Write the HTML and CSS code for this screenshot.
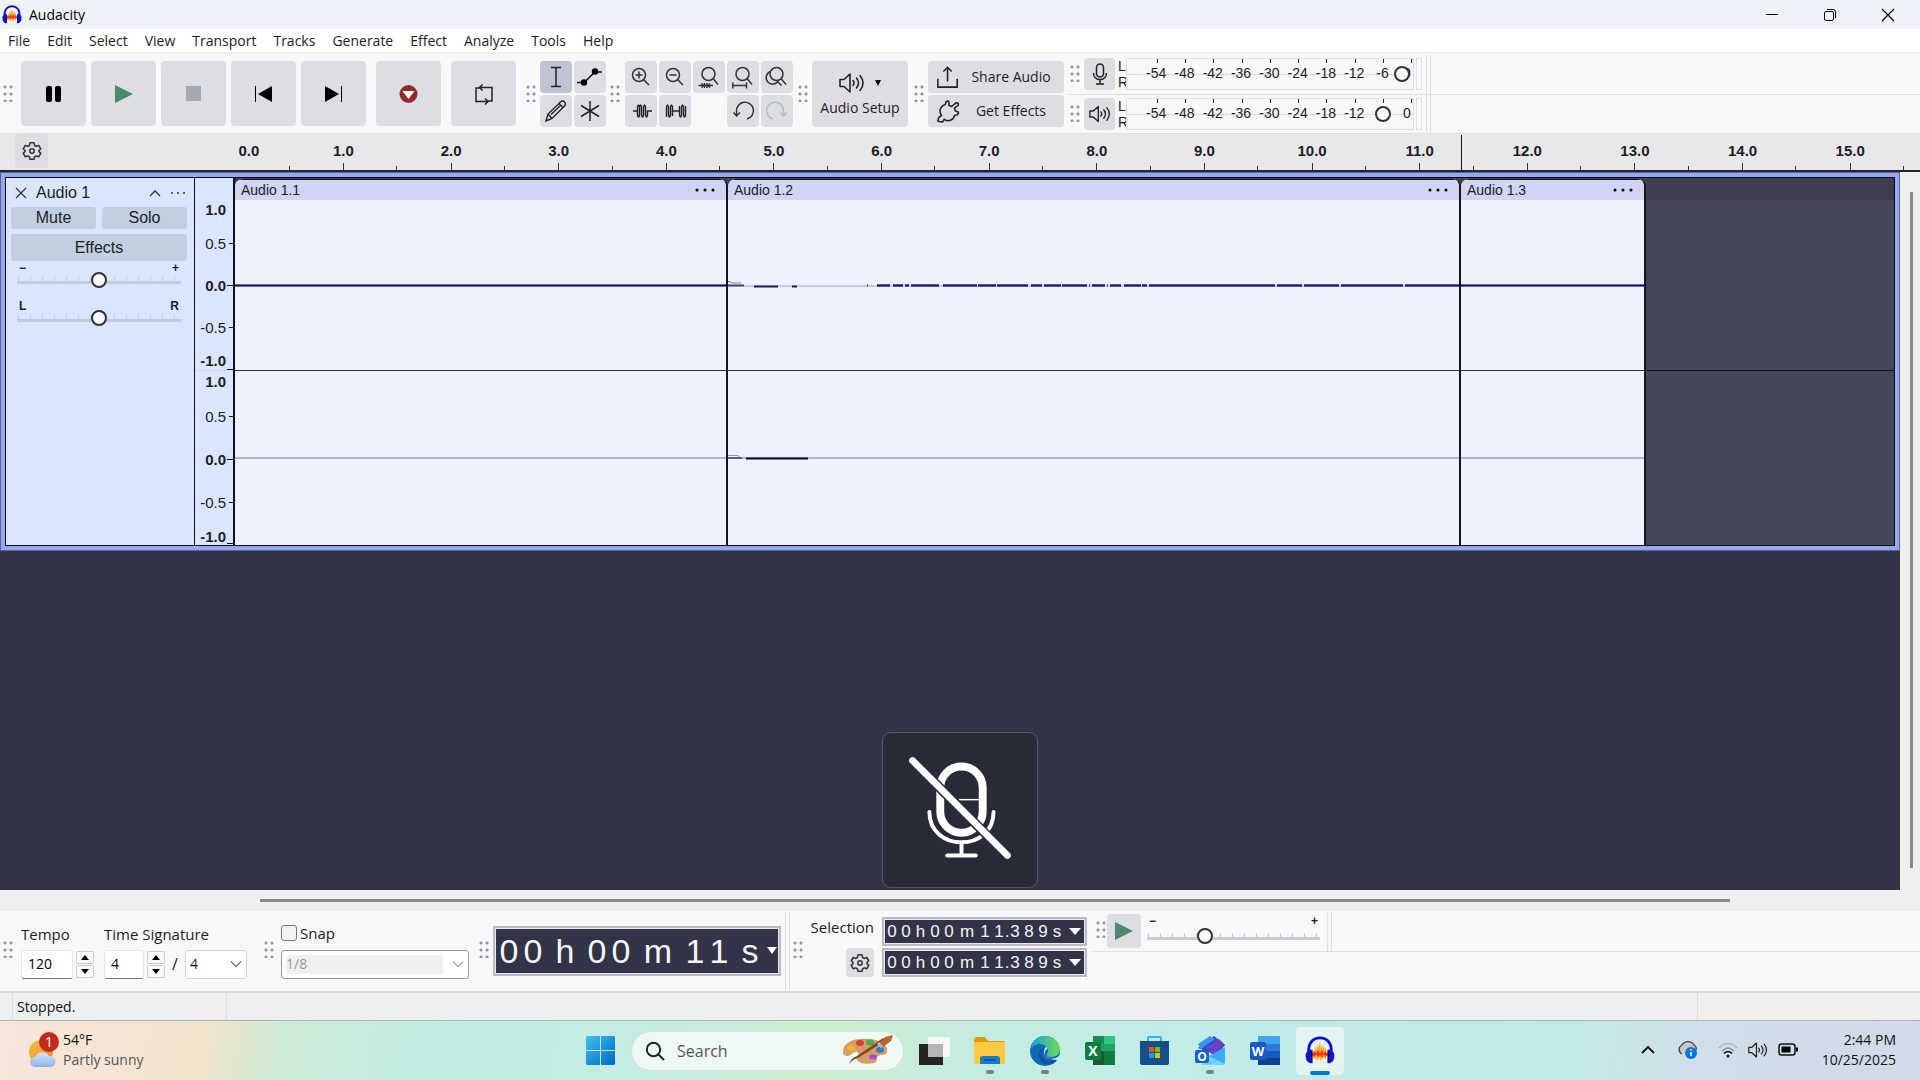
FILE: index.html
```html
<!DOCTYPE html>
<html lang="en">
<head>
<meta charset="utf-8">
<title>Audacity</title>
<link rel="stylesheet" href="styles.css">
</head>
<body>
<svg class="sprite" aria-hidden="true">
  <symbol id="gear" viewBox="0 0 20 20"><path d="M8 1.8h4l.6 2.7 1.6.9 2.6-.9 2 3.3-2 1.9v.8l2 1.900-2 3.300-2.600-.8-1.600.9-.6 2.500H8l-.6-2.500-1.600-.9-2.600.8-2-3.300 2-1.900v-.8l-2-1.900 2-3.300 2.600.9 1.600-.9z" fill="none" stroke="#333" stroke-width="1.500" stroke-linejoin="round"/><circle cx="10" cy="10" r="2.200" fill="none" stroke="#333" stroke-width="1.500"/></symbol>
  <symbol id="audacity" viewBox="0 0 32 32"><path d="M8 20l1-5 1 3 1-7 1 5 1-8 1 6 2-8 1 8 1-6 1 7 1-6 1 6 1-3 1 8-1 5-2-3-1 4-1-4-1 5-2-5-2 5-1-5-1 4-1-4-2 3z" fill="#ffa51e"/><path d="M6 18h3l1-2 2 2 2-3 2 3 2-3 2 3 2-2 1 2h3v3h-3l-1 1-2-2-2 3-2-3-2 3-2-3-2 2-1-1H6z" fill="#f0391d"/><path d="M4 18C3 7 9 2 16 2s13 5 12 16" fill="none" stroke="#1414c8" stroke-width="3"/><path d="M8 15v14H6C1 28 0 22 1 18l4-4zM24 15v14h2c5-1 6-7 5-11l-4-4z" fill="#1414c8"/><path d="M7 16v12M25 16v12" stroke="#0a0a64" stroke-width="1.400"/></symbol>
  <symbol id="speaker" viewBox="0 0 26 20"><path d="M1 6.500h4L11 1v18l-6-5.500H1z" fill="none" stroke="#222" stroke-width="1.600" stroke-linejoin="round"/><path d="M14 7.500q2 2.500 0 5M17.500 5q4 5 0 10M21 2.500q6 7.500 0 15" fill="none" stroke="#222" stroke-width="1.600" stroke-linecap="round"/></symbol>
  <symbol id="chev" viewBox="0 0 12 8"><path d="M1 1.500l5 5 5-5" fill="none" stroke="currentColor" stroke-width="1.300"/></symbol>
</svg>

<header class="titlebar">
  <svg class="logo"><use href="#audacity"/></svg>
  <h1>Audacity</h1>
  <div class="winbtns">
    <button aria-label="Minimize"><svg width="14" height="14"><path d="M1 6.500h12" stroke="#000"/></svg></button>
    <button aria-label="Restore"><svg width="14" height="14" fill="none" stroke="#000"><rect x="1.500" y="3.500" width="9" height="9" rx="1.500"/><path d="M4 1.500h6a2.500 2.500 0 0 1 2.500 2.500v6"/></svg></button>
    <button aria-label="Close"><svg width="14" height="14"><path d="M1 1l12 12M13 1L1 13" stroke="#000" stroke-width="1.200"/></svg></button>
  </div>
</header>

<nav class="menubar">
  <button>File</button><button>Edit</button><button>Select</button><button>View</button><button>Transport</button><button>Tracks</button><button>Generate</button><button>Effect</button><button>Analyze</button><button>Tools</button><button>Help</button>
</nav>

<section class="toolbar" aria-label="Toolbars">
  <i class="grip"></i>
  <div class="transport">
    <button class="btn big" aria-label="Pause"><svg viewBox="0 0 65 65"><rect x="25" y="25" width="6" height="16" rx="2"/><rect x="34" y="25" width="6" height="16" rx="2"/></svg></button>
    <button class="btn big" aria-label="Play"><svg viewBox="0 0 65 65"><path d="M24 24v18l18-9z" fill="#4c8a6c"/></svg></button>
    <button class="btn big" aria-label="Stop"><svg viewBox="0 0 65 65"><path d="M25 25h15v15H25z" fill="#a4a8b2"/></svg></button>
    <button class="btn big" aria-label="Skip to start"><svg viewBox="0 0 65 65"><path d="M24 25h1v16h-1zM41 25v16l-14-8z"/></svg></button>
    <button class="btn big" aria-label="Skip to end"><svg viewBox="0 0 65 65"><path d="M40 25h1v16h-1zM24 25v16l14-8z"/></svg></button>
    <button class="btn big apart" aria-label="Record"><svg viewBox="0 0 65 65"><circle cx="32.500" cy="33" r="9" fill="#8f2b2b"/><path d="M26.500 30h12l-6 8z" fill="#fff"/></svg></button>
    <button class="btn big apart" aria-label="Loop"><svg viewBox="0 0 65 65" fill="none" stroke="#222" stroke-width="1.500"><path d="M29 27h-4v13.500h11M29 26.500h12V40h-4M31.500 23.500l-3 3 3 3M34 37.500l3 3-3 3"/></svg></button>
  </div>
  <i class="grip g10"></i>
  <div class="tools">
    <button class="btn on" aria-label="Selection tool"><svg viewBox="0 0 32 32"><path d="M11 6.500h4.200l.8 1 .8-1H21M11 25.500h4.200l.8-1 .8 1H21M16 7v18" fill="none" stroke="#222" stroke-width="1.500"/></svg></button>
    <button class="btn" aria-label="Envelope tool"><svg viewBox="0 0 32 32"><path d="M3 21.500h7L21 11h7" fill="none" stroke="#111" stroke-width="1.500"/><circle cx="10" cy="21.500" r="3.200"/><circle cx="21" cy="10.500" r="3.200"/></svg></button>
    <button class="btn" aria-label="Draw tool"><svg viewBox="0 0 32 32" fill="none" stroke="#222" stroke-width="1.400"><path d="M6 26l2-7L20.500 7c3-2.500 6.500 1 4 4L12 23.500zM8 19l4 4.500M19 8.500l4 4M11 19.500L21 10"/></svg></button>
    <button class="btn" aria-label="Multi tool"><svg viewBox="0 0 32 32"><path d="M16 6v20M7 10.500l18 11M25 10.500l-18 11" stroke="#222" stroke-width="1.500"/></svg></button>
  </div>
  <i class="grip"></i>
  <div class="zooms">
    <button class="btn" aria-label="Zoom in"><svg viewBox="0 0 32 32" fill="none" stroke="#333" stroke-width="1.500"><circle cx="14" cy="14" r="6.500"/><path d="M18.500 18.500L24 24M10.500 14h7M14 10.500v7"/></svg></button>
    <button class="btn" aria-label="Zoom out"><svg viewBox="0 0 32 32" fill="none" stroke="#333" stroke-width="1.500"><circle cx="14" cy="14" r="6.500"/><path d="M18.500 18.500L24 24M10.500 14h7"/></svg></button>
    <button class="btn" aria-label="Fit selection"><svg viewBox="0 0 32 32" fill="none" stroke="#333" stroke-width="1.500"><circle cx="15.500" cy="13" r="6.500"/><path d="M20 17.500l5 6M5.500 24.500H20M11.500 22v5M14 22v5M8.500 22.500l2 2-2 2M17 22.500l-2 2 2 2"/></svg></button>
    <button class="btn" aria-label="Fit project"><svg viewBox="0 0 32 32" fill="none" stroke="#333" stroke-width="1.500"><circle cx="15.500" cy="13" r="6.500"/><path d="M20 17.500l5 6M6 24.500h13.500M5.800 21.500v6M19.500 21.500v6"/></svg></button>
    <button class="btn" aria-label="Zoom toggle"><svg viewBox="0 0 32 32" fill="none" stroke="#333" stroke-width="1.500"><circle cx="15.500" cy="13" r="6.500"/><path d="M20 17.500l5 6M9.500 10.500a6.500 6.500 0 1 0 8 9M16 20l4.500 4.500"/></svg></button>
    <button class="btn" aria-label="Trim audio"><svg viewBox="0 0 32 32" fill="none" stroke="#222" stroke-width="1.400"><path d="M8 16h4.500v4q1 4 2 0v-8q1-4 2 0v8q1 4 2 0v-8q1-4 2 0v8q1 4 2 0v-4H27M12.500 16v-4q1-4 2 0"/></svg></button>
    <button class="btn" aria-label="Silence audio"><svg viewBox="0 0 32 32" fill="none" stroke="#222" stroke-width="1.400"><path d="M7.500 22V12q1-4 2 0v8q1 4 2 0v-8q1-4 2 0v4h7v4q1 4 2 0v-8q1-4 2 0v8q1 4 2 0V11M13.500 16v5M20.500 16v-5"/></svg></button>
    <button class="btn undo" aria-label="Undo"><svg viewBox="0 0 32 32" fill="none" stroke="#333" stroke-width="1.500"><path d="M20 24a8.500 8.500 0 1 0-10.500-7.500v4M6.500 17.500l3 3.500 3.500-3.500"/></svg></button>
    <button class="btn" aria-label="Redo" disabled><svg viewBox="0 0 32 32" fill="none" stroke="#b6b9c1" stroke-width="1.500"><path d="M12 24a8.500 8.500 0 1 1 10.500-7.500v4M25.500 17.500l-3 3.500-3.500-3.500"/></svg></button>
  </div>
  <i class="grip"></i>
  <button class="btn setup"><span class="setupicon"><svg width="26" height="20"><use href="#speaker"/></svg><svg width="8" height="8"><path d="M1 1h6L4 7z"/></svg></span><span>Audio Setup</span></button>
  <i class="grip g6"></i>
  <div class="share">
    <button class="btn wide"><svg viewBox="0 0 26 26" fill="none" stroke="#222" stroke-width="1.700"><path d="M2 15v9h21v-9M12.500 18V3M8 7l4.500-4.500L17 7"/></svg><span>Share Audio</span></button>
    <button class="btn wide"><svg viewBox="0 0 26 26" fill="none" stroke="#222" stroke-width="1.700" stroke-linejoin="round"><path d="M2 24l1-4 3-2C2 12 6 7 10 6l1-3q3-2 3 1v3l3 1 5-4q3 0 2 3l-4 3 1 3 3 1q1 2-1 3l-3 1c-1 5-7 7-11 4l-2 3z"/></svg><span>Get Effects</span></button>
  </div>
  <div class="meters">
    <div class="meterrow">
      <i class="grip"></i>
      <button class="btn mbtn" aria-label="Record meter"><svg width="18" height="22" viewBox="0 0 18 22" fill="none" stroke="#222" stroke-width="1.500"><rect x="5.500" y="1" width="7" height="13" rx="3.500"/><path d="M2.500 10c0 9 13 9 13 0M9 17v4M5 21h8"/></svg></button>
      <span class="lr"><b>L</b><b>R</b></span>
      <div class="meter"><ul><li>-54</li><li>-48</li><li>-42</li><li>-36</li><li>-30</li><li>-24</li><li>-18</li><li>-12</li><li>-6</li><li>0</li></ul><input type="range" aria-label="Recording volume" min="0" max="100" value="99"></div>
      <i class="clipbox"></i><i class="sep"></i>
    </div>
    <div class="meterrow">
      <i class="grip"></i>
      <button class="btn mbtn" aria-label="Playback meter"><svg width="22" height="18"><use href="#speaker"/></svg></button>
      <span class="lr"><b>L</b><b>R</b></span>
      <div class="meter"><ul><li>-54</li><li>-48</li><li>-42</li><li>-36</li><li>-30</li><li>-24</li><li>-18</li><li>-12</li><li></li><li>0</li></ul><input type="range" aria-label="Playback volume" min="0" max="100" value="92"></div>
      <i class="clipbox"></i><i class="sep"></i>
    </div>
  </div>
</section>

<section class="ruler" aria-label="Timeline">
  <button class="btn gearbtn" aria-label="Timeline options"><svg width="20" height="20"><use href="#gear"/></svg></button>
  <ol><li>0.0</li><li>1.0</li><li>2.0</li><li>3.0</li><li>4.0</li><li>5.0</li><li>6.0</li><li>7.0</li><li>8.0</li><li>9.0</li><li>10.0</li><li>11.0</li><li>12.0</li><li>13.0</li><li>14.0</li><li>15.0</li></ol>
  <i class="playhead"></i>
</section>

<main class="project">
  <section class="tracks">
    <article class="track">
      <div class="panel">
        <div class="phead">
          <button aria-label="Close track"><svg width="12" height="12"><path d="M1 1l10 10M11 1L1 11" stroke="#333" stroke-width="1.200"/></svg></button>
          <span class="name">Audio 1</span>
          <button aria-label="Collapse"><svg width="12" height="8"><path d="M1 7l5-5 5 5" fill="none" stroke="#333" stroke-width="1.300"/></svg></button>
          <button aria-label="Track menu"><svg width="16" height="4" fill="#333"><circle cx="2" cy="2" r="1"/><circle cx="8" cy="2" r="1"/><circle cx="14" cy="2" r="1"/></svg></button>
        </div>
        <div class="prow"><button>Mute</button><button>Solo</button></div>
        <button class="fx">Effects</button>
        <div class="slide"><div><span>−</span><span>+</span></div><input type="range" aria-label="Gain" value="50"></div>
        <div class="slide"><div><span>L</span><span>R</span></div><input type="range" aria-label="Pan" value="50"></div>
      </div>
      <div class="vruler">
        <ul class="vtop"><li class="no">1.0</li><li class="half">0.5</li><li>0.0</li><li class="half">-0.5</li><li class="end"><span>-1.0</span></li></ul>
        <ul class="vbot"><li class="no">1.0</li><li class="half">0.5</li><li>0.0</li><li class="half">-0.5</li><li class="end"><span>-1.0</span></li></ul>
      </div>
      <div class="clips">
        <div class="clip">
          <div class="chead"><span>Audio 1.1</span><button aria-label="Clip menu"><svg width="20" height="4"><circle cx="2" cy="2" r="1.500"/><circle cx="10" cy="2" r="1.500"/><circle cx="18" cy="2" r="1.500"/></svg></button></div>
          <svg class="ch1" viewBox="0 0 492 170" preserveAspectRatio="none"><path d="M0 85.500h492" stroke="#6e69bb" stroke-width="3"/><path d="M0 85.500h492" stroke="#120f40"/></svg>
          <svg class="ch2" viewBox="0 0 492 174" preserveAspectRatio="none"><path d="M0 87.500h492" stroke="#6f6fc6"/></svg>
        </div>
        <div class="clip">
          <div class="chead"><span>Audio 1.2</span><button aria-label="Clip menu"><svg width="20" height="4"><circle cx="2" cy="2" r="1.500"/><circle cx="10" cy="2" r="1.500"/><circle cx="18" cy="2" r="1.500"/></svg></button></div>
          <svg class="ch1" viewBox="0 0 731 170" preserveAspectRatio="none" fill="none"><path d="M0 81.500h2l2 1.500h9" stroke="#7f7ac8"/><path d="M16 86h715" stroke="#a5a0d8"/><path d="M0 85.500h16" stroke="#45414f" stroke-width="2"/><path d="M26 86.500h24M64 86.500h5" stroke="#1f1c56" stroke-width="2"/><path d="M139 85.500h1M149 85.500h13M165 85.500h10M177 85.500h4M183 85.500h28M215 85.500h34M250 85.500h18M269 85.500h31M303 85.500h11M316 85.500h17M334 85.500h25M361 85.500h1M364 85.500h13M379 85.500h1M382 85.500h11M396 85.500h17M414 85.500h5M421 85.500h126M549 85.500h25M576 85.500h35M613 85.500h62M677 85.500h54" stroke="#5a559f" stroke-width="3"/><path d="M149 85.500h13M165 85.500h10M177 85.500h4M183 85.500h28M215 85.500h34M250 85.500h18M269 85.500h31M303 85.500h11M316 85.500h17M334 85.500h25M364 85.500h13M382 85.500h11M396 85.500h17M414 85.500h5M421 85.500h126M549 85.500h25M576 85.500h35M613 85.500h62M677 85.500h54" stroke="#1f1c56"/></svg>
          <svg class="ch2" viewBox="0 0 731 174" preserveAspectRatio="none" fill="none"><path d="M0 87.500h731" stroke="#6f6fc6"/><path d="M0 85h9l3 1" stroke="#8f8bcb"/><path d="M0 87.500h14" stroke="#111"/><path d="M18 88h62" stroke="#0d0b2c" stroke-width="2"/></svg>
        </div>
        <div class="clip">
          <div class="chead"><span>Audio 1.3</span><button aria-label="Clip menu"><svg width="20" height="4"><circle cx="2" cy="2" r="1.500"/><circle cx="10" cy="2" r="1.500"/><circle cx="18" cy="2" r="1.500"/></svg></button></div>
          <svg class="ch1" viewBox="0 0 184 170" preserveAspectRatio="none"><path d="M0 85.500h184" stroke="#6e69bb" stroke-width="3"/><path d="M0 85.500h184" stroke="#120f40"/></svg>
          <svg class="ch2" viewBox="0 0 184 174" preserveAspectRatio="none"><path d="M0 87.500h184" stroke="#6f6fc6"/></svg>
        </div>
        <div class="empty"><i></i></div>
      </div>
    </article>
    <div class="muted" role="img" aria-label="Microphone muted">
      <svg viewBox="0 0 156 156" fill="none" stroke="#fff"><rect x="58" y="34" width="43" height="67" rx="21.500" stroke-width="8"/><path d="M47 80c0 41 65 41 65 0" stroke-width="4" stroke-linecap="round"/><path d="M79.500 112v11" stroke-width="4"/><path d="M65 124h29" stroke-width="4" stroke-linecap="round"/><path d="M77 67.500h21" stroke-width="1.500"/><path d="M30 28l96 96" stroke="#292a37" stroke-width="10"/><path d="M30 28l96 96" stroke-width="7" stroke-linecap="round"/></svg>
    </div>
  </section>
  <div class="vscroll"><i></i></div>
  <div class="hscroll"><i></i></div>
</main>

<section class="bottombar" aria-label="Bottom toolbars">
  <i class="grip"></i>
  <div class="field tempo"><label for="tempo">Tempo</label>
    <div class="line"><input id="tempo" type="text" value="120"><span class="spin"><button aria-label="Tempo up"><svg width="8" height="5"><path d="M0 5h8L4 0z"/></svg></button><button aria-label="Tempo down"><svg width="8" height="5"><path d="M0 0h8L4 5z"/></svg></button></span></div></div>
  <div class="field sig"><label for="beats">Time Signature</label>
    <div class="line"><input id="beats" type="text" value="4"><span class="spin"><button aria-label="Beats up"><svg width="8" height="5"><path d="M0 5h8L4 0z"/></svg></button><button aria-label="Beats down"><svg width="8" height="5"><path d="M0 0h8L4 5z"/></svg></button></span><span class="slash">/</span><span class="combo"><select aria-label="Note value"><option>4</option></select><svg width="12" height="8"><use href="#chev"/></svg></span></div></div>
  <i class="grip"></i>
  <div class="field snap"><label><input type="checkbox">Snap</label>
    <span class="combo off"><select aria-label="Snap to" disabled><option>1/8</option></select><svg width="12" height="8"><use href="#chev"/></svg></span></div>
  <i class="grip"></i>
  <div class="time large"><span>0</span><span>0</span><span class="h">h</span><span>0</span><span>0</span><span class="m">m</span><span>1</span><span>1</span><span class="s">s</span><button aria-label="Time format"><svg width="10" height="8"><path d="M0 0h10L5 7z" fill="#fff"/></svg></button></div>
  <i class="sep"></i>
  <i class="grip"></i>
  <div class="selection">
    <span class="sellabel">Selection</span>
    <div class="time"><span>0</span><span>0</span><span class="h">h</span><span>0</span><span>0</span><span class="m">m</span><span>1</span><span>1</span><span class="dot">.</span><span>3</span><span>8</span><span>9</span><span>s</span><button aria-label="Time format"><svg width="12" height="7"><path d="M0 0h12L6 7z" fill="#fff"/></svg></button></div>
    <button class="btn selgear" aria-label="Selection options"><svg width="20" height="20"><use href="#gear"/></svg></button>
    <div class="time"><span>0</span><span>0</span><span class="h">h</span><span>0</span><span>0</span><span class="m">m</span><span>1</span><span>1</span><span class="dot">.</span><span>3</span><span>8</span><span>9</span><span>s</span><button aria-label="Time format"><svg width="12" height="7"><path d="M0 0h12L6 7z" fill="#fff"/></svg></button></div>
  </div>
  <div class="speed">
    <i class="grip"></i>
    <button class="btn playspeed" aria-label="Play at speed"><svg width="18" height="18"><path d="M0 0v18l18-9z" fill="#4c8a6c"/></svg></button>
    <div class="slide"><div><span>−</span><span>+</span></div><input type="range" aria-label="Playback speed" value="32"></div>
    <i class="sep"></i>
  </div>
</section>

<footer class="status"><span></span><span>Stopped.</span><span></span><span></span></footer>

<footer class="taskbar">
  <a class="weather" href="#"><svg width="36" height="36" viewBox="0 0 36 36"><defs><linearGradient id="sun" x2="1" y2="1"><stop stop-color="#f0c040"/><stop offset="1" stop-color="#ee8a2c"/></linearGradient><linearGradient id="cl" x2="0" y2="1"><stop stop-color="#d5e4fa"/><stop offset="1" stop-color="#8fb2ea"/></linearGradient></defs><circle cx="14" cy="20" r="12" fill="url(#sun)"/><path d="M8 35a5 5 0 0 1 0-10 8 8 0 0 1 14-1 5.500 5.500 0 0 1 2 11z" fill="url(#cl)"/><circle cx="22" cy="10" r="10" fill="#c42b1c"/><text x="22" y="15" text-anchor="middle" font-size="14" fill="#fff">1</text></svg><span><b>54°F</b><small>Partly sunny</small></span></a>
  <div class="apps">
    <button aria-label="Start"><svg width="29" height="29"><defs><linearGradient id="win" x2="1" y2="1"><stop stop-color="#3fc0f5"/><stop offset="1" stop-color="#0067c4"/></linearGradient></defs><path d="M1 0h13v14H0V1zM15 0h13l1 1v13H15zM0 15h14v14H1l-1-1zM15 15h14v13l-1 1H15z" fill="url(#win)"/></svg></button>
    <label class="search"><svg width="20" height="20"><circle cx="8.500" cy="8.500" r="6.700" fill="none" stroke="#222" stroke-width="2"/><path d="M13 13l6 6" stroke="#222" stroke-width="2"/></svg><input type="search" placeholder="Search" aria-label="Search">
      <svg width="52" height="32" viewBox="0 0 52 32"><path d="M2 17C2 7 14 3 26 4c12 0 22 6 20 13-1 4-6 2-9 4-3 3 1 5-4 7-7 2-16 0-17-3-1-4 4-6 0-8-3-1-5 3-9 4-3 0-5-1-5-4z" fill="#d79d67"/><ellipse cx="10" cy="13" rx="4" ry="3" fill="#f0b429"/><ellipse cx="19" cy="8" rx="4" ry="3" fill="#d93a3a"/><ellipse cx="29" cy="7.500" rx="4" ry="3" fill="#44ab50"/><ellipse cx="39" cy="15" rx="4" ry="3" fill="#3777cf"/><ellipse cx="32" cy="22" rx="4" ry="2.500" fill="#a34fd3"/><path d="M8 29q4-5 9-6L44 6l-2-3L16 21q-6 2-8 8z" fill="#7b4a2b"/><path d="M38 8l6-6 8-2-2 6-8 6z" fill="#b8632c"/><path d="M36 9l4 4 2-2-4-4z" fill="#8fc9ef"/></svg></label>
    <button aria-label="Task view"><svg width="32" height="30"><path d="M0 8h24v21H0z" fill="#252525"/><path d="M9 1h20q2 0 2 2v16q0 2-2 2H9z" fill="#f8f8f8"/><path d="M9 8h15v13H9z" fill="#b5b5b5"/></svg></button>
    <button aria-label="File Explorer" class="open"><svg width="32" height="30"><path d="M0 4q0-3 3-3h8l3 4h15q2 0 2 2v4H0z" fill="#d99d16"/><path d="M0 6h31v20q0 2-2 2H2q-2 0-2-2z" fill="#fcca42"/><path d="M6 23q0-3 3-3h14q3 0 3 3v5H6z" fill="#1a7bc9"/><path d="M10 24h12" stroke="#0b4f8e" stroke-width="1.500"/></svg></button>
    <button aria-label="Edge" class="open"><svg width="30" height="30" viewBox="0 0 30 30"><defs><linearGradient id="e1" x2="1"><stop stop-color="#1e9de0"/><stop offset="1" stop-color="#6bdc52"/></linearGradient></defs><circle cx="15" cy="15" r="15" fill="#0f6ab8"/><path d="M1 13C2 5 8 0 15 0c9 0 15 7 15 13 0 6-5 8-9 8-3 0-5-1-4-3 3-5-2-10-7-10-4 0-7 2-9 5z" fill="url(#e1)"/><path d="M17 12c-5 1-7 6-4 10 3 4 10 4 15 0-1 2-3 5-6 6-8 2-14-4-13-10 0-4 4-7 8-6z" fill="#1450a0"/><path d="M17 13c-3 2-3 7 1 9 4 2 9 0 11-2l2-2v4l-4 2c-5 0-13-3-13-8 0-3 1-5 3-5z" fill="#cdeee2"/></svg></button>
    <button aria-label="Excel"><svg width="30" height="30"><path d="M8 0h20q2 0 2 2v27H8z" fill="#21a366"/><path d="M8 0h11v8H8z" fill="#1b8a56"/><path d="M19 0h9q2 0 2 2v6H19z" fill="#33c481"/><path d="M8 15h11v14H8z" fill="#185c37"/><path d="M19 15h11v14H19z" fill="#107c41"/><rect y="6" width="16" height="18" rx="2" fill="#107c41"/><text x="8" y="20" text-anchor="middle" font-size="14" font-weight="700" fill="#fff">X</text></svg></button>
    <button aria-label="Store"><svg width="30" height="30"><path d="M8 6V2q0-1 1-1h11q1 0 1 1v4" fill="none" stroke="#2fb5ea" stroke-width="2"/><path d="M0 5h29v22q0 2-3 2H3q-3 0-3-2z" fill="#164f86"/><path d="M9 11h5v5H9z" fill="#f25022"/><path d="M15 11h5v5h-5z" fill="#7fba00"/><path d="M9 17h5v5H9z" fill="#00a4ef"/><path d="M15 17h5v5h-5z" fill="#ffb900"/></svg></button>
    <button aria-label="Outlook" class="open"><svg width="30" height="30"><path d="M3 12L19 0l11 9-8 10z" fill="#2a50c8"/><path d="M10 12L24 3l6 6-12 10z" fill="#6b3fc4"/><path d="M3 8l12-8 5 3L6 13z" fill="#3d92ea"/><path d="M14 20l16-9v15q0 3-3 3H7z" fill="#3fa9f5"/><path d="M14 20l16 8-3 1H7z" fill="#6fd3ff"/><rect y="14" width="14" height="13" rx="2" fill="#1066c0"/><text x="7" y="25" text-anchor="middle" font-size="12" font-weight="700" fill="#fff">O</text></svg></button>
    <button aria-label="Word"><svg width="30" height="30"><path d="M8 0h20q2 0 2 2v27H8z" fill="#2b7cd3"/><path d="M8 0h20q2 0 2 2v6H8z" fill="#41a5ee"/><path d="M8 15h22v7H8z" fill="#185abd"/><path d="M8 22h22v7H8z" fill="#103f91"/><rect y="6" width="16" height="18" rx="2" fill="#185abd"/><text x="8" y="20" text-anchor="middle" font-size="13" font-weight="700" fill="#fff">W</text></svg></button>
    <button aria-label="Audacity" class="active"><svg width="32" height="30"><use href="#audacity"/></svg></button>
  </div>
  <div class="tray">
    <button aria-label="Hidden icons"><svg width="16" height="10"><path d="M2 8l6-6 6 6" fill="none" stroke="#111" stroke-width="1.800"/></svg></button>
    <button class="cloud" aria-label="OneDrive"><svg width="22" height="20"><path d="M6 14a5 5 0 0 1 0-9 7 7 0 0 1 12 0q3 2 2 5" fill="#c9c9c9" stroke="#444" stroke-width="1.300"/><circle cx="15" cy="13" r="6" fill="#0078d7"/><path d="M15 12v4M15 9v1.500" stroke="#fff" stroke-width="1.600"/></svg></button>
    <button class="wifi" aria-label="Wi-Fi"><svg width="20" height="18" fill="none" stroke-width="1.500"><path d="M1 7q9-9 18 0" stroke="#a9b5bd"/><path d="M4 10q6-6 12 0" stroke="#8a979f"/><path d="M6 12.500q4-4 8 0" stroke="#111"/><circle cx="10" cy="15" r="1.500" fill="#111"/></svg></button>
    <button aria-label="Volume"><svg width="20" height="16"><use href="#speaker"/></svg></button>
    <button aria-label="Battery"><svg width="21" height="14"><rect x="1" y="1" width="16" height="11" rx="2.500" fill="none" stroke="#111" stroke-width="1.500"/><path d="M3.500 3.500h9v6h-9z"/><path d="M18 4.500h2v4h-2z"/></svg></button>
    <span class="clock"><b>2:44 PM</b><b>10/25/2025</b></span>
  </div>
</footer>
</body>
</html>
```
FILE: styles.css
```css
* { box-sizing: border-box; }
body { margin: 0; min-height: 100vh; display: flex; flex-direction: column; font: 14px/18px "Open Sans", "Noto Sans", sans-serif; color: #1c1c28; background: #f8f8f8; overflow: hidden; }
button { border: 0; padding: 0; margin: 0; background: none; font: inherit; color: inherit; display: flex; align-items: center; justify-content: center; flex: none; }
ul, ol { list-style: none; margin: 0; padding: 0; }
b, small { font-weight: 400; font-size: inherit; }
svg { display: block; flex: none; }
.sprite { position: absolute; width: 0; height: 0; }

.titlebar { height: 29px; background: #eef3fa; display: flex; align-items: center; padding: 0 3px 0 2px; }
.logo { width: 20px; height: 20px; }
.titlebar h1 { margin: 0 auto 0 7px; font-size: 14px; font-weight: 400; color: #000; }
.winbtns { display: flex; }
.winbtns button { width: 58px; height: 28px; }

.menubar { height: 25px; background: #fff; border-bottom: 2px solid #f0f0f0; display: flex; align-items: center; gap: 17px; padding-left: 8px; }

.toolbar { height: 80px; display: flex; align-items: center; gap: 4px; padding-left: 3px; border-bottom: 1px solid #e2e2e4; }
.grip { width: 10px; height: 17px; flex: none; background: radial-gradient(circle at 2px 2px, #9496a8 0 1px, transparent 2px) 0 0 / 6px 7px; }
.btn { background: #dcdee3; border-radius: 4px; }
.btn svg { overflow: visible; }
.transport { display: flex; gap: 5px; margin-left: 4px; }
.big { width: 65px; height: 65px; }
.big svg { width: 65px; height: 65px; }
.apart { margin-left: 5px; }
.g10 { margin-left: 6px; }
.g6 { margin-left: 2px; }
.tools, .zooms { display: grid; grid-template-columns: repeat(2, 32px); gap: 2px; }
.zooms { grid-template-columns: repeat(5, 32px); margin: 0 1px; }
.tools .btn, .zooms .btn, .tools svg, .zooms svg { width: 32px; height: 32px; }
.tools .on { background: #c0c3d1; }
.undo { grid-column: 4; }
.setup { width: 96px; height: 66px; flex-direction: column; gap: 6px; padding-top: 2px; }
.setupicon { display: flex; align-items: center; gap: 9px; }
.share { display: flex; flex-direction: column; gap: 2px; }
.wide { width: 136px; height: 32px; padding: 0 8px; }
.wide svg { width: 24px; height: 24px; }
.wide span { flex: 1; text-align: center; padding-left: 6px; }
.meters { flex: 1; align-self: stretch; display: flex; flex-direction: column; padding-top: 1px; }
.meterrow { height: 40px; display: flex; align-items: flex-start; padding: 3px 0 0 2px; border-bottom: 1px solid #e0e0e4; }
.meterrow + .meterrow { height: 38px; border: 0; }
.meterrow .grip { margin: 7px 4px 0 0; }
.mbtn { width: 31px; height: 32px; }
.lr { width: 11px; display: flex; flex-direction: column; padding-left: 3px; font: 14px/16px "Liberation Sans", sans-serif; }
.meter { width: 288px; height: 32px; border: 1px solid #dcdce4; position: relative; background: linear-gradient(#dcdce4, #dcdce4) 0 15px / 100% 1px no-repeat; }
.meter ul { display: grid; grid-template-columns: repeat(10, 1fr); margin: 0 -13px 0 16px; font: 14px/16px "Liberation Sans", sans-serif; }
.meter li { text-align: center; height: 30px; padding: 6px 2px 0 0; background: linear-gradient(#222, #222) 50% 0 / 1px 4px no-repeat; }
.meter li:last-child { padding-right: 10px; }
.clipbox { width: 6px; height: 32px; margin-left: 2px; border: 1px solid #dcdce4; }
.meterrow .sep { margin: -3px 0 0 4px; }
.meterrow + .meterrow .sep { height: 38px; }
.sep { width: 5px; height: 39px; border: solid #e0e0e4; border-width: 0 1px; flex: none; }

input[type=range] { appearance: none; background: none; margin: 0; height: 16px; }
input[type=range]::-webkit-slider-thumb { appearance: none; width: 16px; height: 16px; border-radius: 8px; border: 2px solid #333; background: #fbfbfb; }
.meter input { position: absolute; left: 0; top: 7px; width: 100%; }

.ruler { height: 38px; background: #e8e8ea; border-bottom: 2px solid #22232d; position: relative; display: flex; padding: 0 16px 0 15px; }
.gearbtn { width: 33px; height: 34px; }
.ruler ol { flex: 1; display: grid; grid-template-columns: repeat(16, 1fr); margin-left: 134px; font: bold 15px/34px "Liberation Sans", sans-serif; text-align: center; }
.ruler li { background: linear-gradient(#333, #333) 50% 100% / 1px 7px no-repeat, linear-gradient(#333, #333) 100% 100% / 1px 4px no-repeat; }
.ruler li:first-child { padding-left: 26px; background: linear-gradient(#333, #333) 100% 100% / 1px 4px no-repeat; }
.playhead { position: absolute; left: 76.1%; top: 1px; bottom: 0; width: 1px; background: #111; }

.project { flex: 1; display: grid; grid-template: 1fr 21px / 1fr 20px; background: #efefef; }
.tracks { background: #313446; position: relative; }
.track { height: 379px; display: flex; border: solid #98a5ef; border-width: 5px 5px 5px 5px; box-shadow: inset 0 0 0 1px #0c0d16; padding: 1px; background: #0c0d16; outline: 1px solid #5b638f; outline-offset: -1px; }
.panel { width: 188px; background: #dae6ff; padding: 5px 7px 0 5px; font: 16px/20px "Liberation Sans", sans-serif; }
.phead { display: flex; align-items: center; height: 20px; padding: 0 1px 0 4px; gap: 9px; }
.phead .name { flex: 1; }
.prow { display: flex; gap: 6px; margin-top: 4px; }
.prow button { flex: 1; height: 22px; background: #c1d0df; border-radius: 3px; }
.fx { width: 100%; height: 27px; background: #c1d0df; border-radius: 3px; margin-top: 5px; }
.slide { margin: 0 6px; font: bold 12px/14px "Liberation Sans", sans-serif; }
.slide div { display: flex; justify-content: space-between; padding: 0 2px; }
.slide input { display: block; width: 100%; background: linear-gradient(#c0cedb, #c0cedb) 0 9px / 100% 3px no-repeat, repeating-linear-gradient(90deg, #c0cedb 0 1px, transparent 1px 12px) 1px 5px / 100% 4px no-repeat; }
.panel .slide input { margin-top: -3px; }
.panel .slide + .slide { margin-top: 11px; }
.vruler { width: 40px; margin-left: 1px; background: #dae6ff; border-right: 2px solid #0c0d16; padding-top: 21px; font: 15px/15px "Liberation Sans", sans-serif; }
.vtop { display: grid; grid-template-rows: 20px 48px 37px 46px 20px; border-bottom: 1px solid #d8d5e4; }
.vbot { display: grid; grid-template-rows: 20px 51px 34px 53px 15px; }
.vruler li { display: flex; align-items: center; justify-content: flex-end; font-weight: 700; gap: 1px; }
.vruler li::after { content: ""; width: 6px; height: 1px; background: #111; }
.vruler .half { font-weight: 400; gap: 3px; }
.vruler .half::after { width: 4px; }
.vruler .no::after { background: none; }
.vruler .end::after { align-self: flex-end; }
.vbot .end { align-items: flex-start; }
.clips { flex: 1; display: grid; grid-template-columns: 493fr 733fr 185fr 248fr; background: #3f3e51; padding-top: 1px; }
.clip { background: #eff1ff; border-radius: 8px 8px 0 0; border-right: 2px solid #14151f; display: flex; flex-direction: column; min-width: 0; overflow: hidden; }
.chead { height: 21px; background: #cfd5f2; border-top: 1px solid #14151f; display: flex; align-items: center; justify-content: space-between; padding: 0 11px 0 6px; font: 14px/18px "Liberation Sans", sans-serif; }
.ch1 { width: 100%; height: 170px; }
.ch2 { width: 100%; height: 174px; border-top: 1px solid #333; }
.empty { background: #45475a; margin-top: 21px; }
.empty i { display: block; height: 171px; border-bottom: 1px solid #111; }
.muted { position: absolute; left: calc(50% - 68px); bottom: 2px; width: 156px; height: 156px; background: #292a37; border: 1px solid #55566a; border-radius: 9px; }
.vscroll { padding: 20px 0 22px 10px; }
.vscroll i { display: block; width: 3px; height: 100%; background: #8b8b8b; }
.hscroll { padding: 9px 190px 0 260px; grid-column: 1 / 3; }
.hscroll i { display: block; height: 3px; background: #8b8b8b; }

.bottombar { height: 80px; display: flex; align-items: center; padding-left: 3px; }
.bottombar > .grip { margin-bottom: 4px; }
.field { display: flex; flex-direction: column; gap: 6px; height: 55px; }
.field label { height: 20px; line-height: 20px; display: flex; align-items: center; font-size: 15px; }
.line { display: flex; height: 29px; align-items: center; }
.line input { width: 52px; height: 29px; border: 1px solid #e6e6e6; border-bottom: 1px solid #777; border-radius: 3px; background: #fff; font: inherit; padding: 0 6px 2px; }
.sig .line input { width: 40px; }
.spin { display: flex; flex-direction: column; gap: 1px; margin-left: 3px; }
.spin button { width: 18px; height: 13px; border: 1px solid #ccc; border-radius: 2px; background: #fbfbfb; }
.tempo { width: 73px; margin-left: 8px; }
.sig { width: 143px; margin: 0 17px 0 10px; }
.slash { width: 20px; text-align: center; font-size: 16px; }
.combo { width: 62px; height: 29px; display: flex; align-items: center; position: relative; color: #777; }
.combo select { appearance: none; width: 100%; height: 29px; border: 1px solid #d5d5d5; border-radius: 3px; background: #fff; font: inherit; padding: 0 4px; color: #1c1c28; }
.combo svg { position: absolute; right: 5px; }
.snap { width: 188px; margin: 0 10px 0 7px; }
.snap input { width: 16px; height: 16px; margin: 0 3px 0 0; appearance: none; border: 1px solid #777; border-radius: 3px; background: #f3f3f3; }
.snap label { height: 18px; }
.snap .combo { width: 100%; margin-top: 2px; color: #aaa; }
.snap select { border: 1px solid #999; opacity: 1; color: #999; background: linear-gradient(#f0f0f0, #f0f0f0) 5px 4px / 156px 19px no-repeat #fff; }
.time { height: 29px; width: 205px; border: 2px solid #b9bac4; background: #313446; color: #f4f4f4; display: flex; align-items: center; font: 17px/25px "Liberation Sans", sans-serif; box-shadow: inset 0 0 0 1px #e8e8ee; padding-left: 1px; }
.time span { width: 14px; display: flex; justify-content: center; flex: none; }
.time .h { width: 15px; }
.time .m { width: 22px; }
.time .dot { width: 2px; }
.time button { margin-left: 5px; }
.large { width: 288px; height: 50px; margin-left: 4px; padding-left: 2px; font-size: 34px; line-height: 46px; overflow: hidden; }
.large span { width: 24px; }
.large .h { width: 40px; }
.large .m { width: 50px; }
.large .s { width: 38px; }
.large button { margin-left: -2px; }
.bottombar > .sep { height: 78px; margin: 0 3px 0 4px; }
.selection { display: grid; grid-template-columns: 64px 205px; gap: 2px 8px; margin: 0 0 8px 7px; justify-items: end; height: 64px; align-content: center; }
.sellabel { line-height: 20px; font-size: 15px; }
.selgear { width: 28px; height: 29px; }
.speed { flex: 1; align-self: flex-start; height: 41px; margin-left: 6px; padding-left: 3px; display: flex; align-items: center; border-bottom: 1px solid #e0e0e4; }
.speed .grip { margin-bottom: 4px; }
.playspeed { width: 34px; height: 34px; margin: 0 6px 0 1px; }
.speed .slide { width: 173px; margin: 0 7px 4px 0; }

.status { height: 29px; border-top: 2px solid #dcdcdc; background: #efefef; display: grid; grid-template-columns: 13px 214px 1fr 222px; color: #111; line-height: 28px; }
.status span { border-right: 1px solid #dcdcdc; padding-left: 4px; }
.status span:last-child { border: 0; }

.taskbar { height: 60px; border-top: 1px solid #a8b6b3; display: grid; grid-template-columns: 1fr auto 1fr; align-items: center; background: linear-gradient(100deg, #f6e6db 0, #f5e4d3 7%, #f0e5cb 11%, #cdebd6 15%, #c2ece4 23%, #c4ece3 35%, #d0eecd 42%, #c6ece0 50%, #c1ece8 62%, #c4e9e9 82%, #cfdfe9 88%, #d2dae8 100%); }
.weather { display: flex; align-items: center; padding: 0 0 2px 27px; color: #111; text-decoration: none; line-height: 20px; }
.weather span { display: flex; flex-direction: column; }
.weather small { color: #555; }
.apps { display: flex; align-items: center; gap: 7px; }
.apps button { width: 48px; height: 48px; border-radius: 5px; position: relative; }
.apps .active { background: #e4f5f1; }
.open::after, .active::after { content: ""; position: absolute; bottom: 1px; width: 8px; height: 4px; border-radius: 2px; background: #6f8583; }
.active::after { width: 20px; background: #0078d4; bottom: 0; }
.search { width: 273px; height: 40px; border-radius: 20px; background: #eef9f3; border: 1px solid #cfe4dc; display: flex; align-items: center; padding: 0 10px 0 13px; }
.search input { flex: 1; min-width: 0; border: 0; background: none; font: inherit; font-size: 16px; padding: 0 0 0 12px; }
.search input::placeholder { color: #555; opacity: 1; }
.tray { display: flex; align-items: center; justify-content: flex-end; padding: 0 24px 2px 0; gap: 10px; }
.cloud { margin-left: 10px; }
.wifi { margin-left: 10px; }
.clock { width: 87px; display: flex; flex-direction: column; align-items: flex-end; line-height: 20px; color: #111; }
```
